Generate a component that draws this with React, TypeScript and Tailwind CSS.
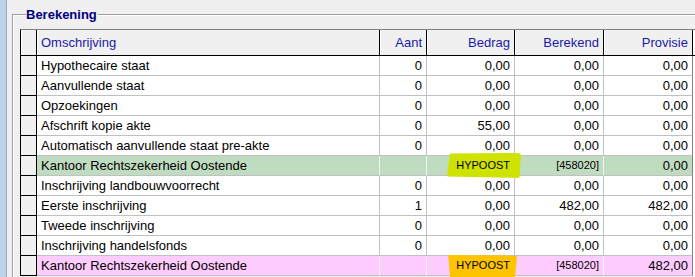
type Row = {
  d: string;
  a?: string;
  b: string;
  c: string;
  p: string;
  kind?: "green" | "pink";
};

const rows: Row[] = [
  { d: "Hypothecaire staat", a: "0", b: "0,00", c: "0,00", p: "0,00" },
  { d: "Aanvullende staat", a: "0", b: "0,00", c: "0,00", p: "0,00" },
  { d: "Opzoekingen", a: "0", b: "0,00", c: "0,00", p: "0,00" },
  { d: "Afschrift kopie akte", a: "0", b: "55,00", c: "0,00", p: "0,00" },
  { d: "Automatisch aanvullende staat pre-akte", a: "0", b: "0,00", c: "0,00", p: "0,00" },
  { d: "Kantoor Rechtszekerheid Oostende", b: "HYPOOST", c: "[458020]", p: "0,00", kind: "green" },
  { d: "Inschrijving landbouwvoorrecht", a: "0", b: "0,00", c: "0,00", p: "0,00" },
  { d: "Eerste inschrijving", a: "1", b: "0,00", c: "482,00", p: "482,00" },
  { d: "Tweede inschrijving", a: "0", b: "0,00", c: "0,00", p: "0,00" },
  { d: "Inschrijving handelsfonds", a: "0", b: "0,00", c: "0,00", p: "0,00" },
  { d: "Kantoor Rechtszekerheid Oostende", b: "HYPOOST", c: "[458020]", p: "482,00", kind: "pink" },
];

const head = "h-[26px] bg-[#f0f0f0] border-r border-b border-black shadow-[inset_1px_0_0_#fff] flex items-center text-[#1a1aa8]";

const DataRow = ({ r }: { r: Row }) => {
  const bg = r.kind === "green" ? "bg-[#c0dcc0]" : r.kind === "pink" ? "bg-[#ffccff]" : "bg-white";
  const line = r.kind ? "border-r border-b border-r-[#f4f4f4] border-b-[#c0c0c0]" : "border-r border-b border-[#c0c0c0]";
  const cell = `h-[20px] flex items-center justify-end pr-[4px] ${bg} ${line}`;
  return (
    <>
      <div className="h-[20px] bg-[#f0f0f0] border-r border-b border-black" />
      <div className={`h-[20px] flex items-center pl-[4px] ${bg} ${line}`}>{r.d}</div>
      <div className={cell}>{r.a ?? ""}</div>
      {r.kind ? (
        <div className={`${cell} relative`}>
          <span
            className={
              r.kind === "green"
                ? "absolute left-[20px] top-[-3px] w-[74px] h-[25px] bg-[#d0e200] rounded-[3px] [clip-path:polygon(4%_2%,100%_0,98%_100%,0_94%)]"
                : "absolute left-[19px] top-[-1px] w-[71px] h-[24px] bg-[#ffc400] rounded-[3px] [clip-path:polygon(3%_0,100%_2%,97%_100%,6%_100%)]"
            }
          />
          <span className="relative text-[11px]">{r.b}</span>
        </div>
      ) : (
        <div className={cell}>{r.b}</div>
      )}
      <div className={cell}>{r.kind ? <span className="text-[11px]">{r.c}</span> : r.c}</div>
      <div className={`h-[20px] flex items-center justify-end pr-[4px] ${bg} border-r border-b border-r-[#808080] border-b-[#c0c0c0]`}>
        {r.p}
      </div>
      <div className="h-[20px] bg-white" />
    </>
  );
};

export default function App() {
  return (
    <div className="w-[695px] h-[277px] overflow-hidden bg-[#f0f0f0] flex font-['Liberation_Sans',Arial,sans-serif] text-[13px] text-black">
      <div className="w-[7px] shrink-0 bg-[#bcd3ea] border-r border-[#9aa8b8]" />
      <div className="flex-1 pl-[5px] pt-[7px] min-w-0">
        <fieldset className="border-t border-l border-[#a0a0a0] shadow-[inset_1px_1px_0_#fff] pl-[7px] pt-[7px] h-[300px]">
          <legend className="ml-[6px] pr-[1px] bg-[#f0f0f0] font-bold text-[#000080] leading-[15px]">Berekening</legend>
          <div className="grid grid-cols-[16px_343px_47px_88px_89px_89px_1fr] border-t border-l border-t-[#808080] border-l-black leading-[19px]">
            <div className={head} />
            <div className={`${head} pl-[4px]`}>Omschrijving</div>
            <div className={`${head} justify-end pr-[4px]`}>Aant</div>
            <div className={`${head} justify-end pr-[4px]`}>Bedrag</div>
            <div className={`${head} justify-end pr-[4px]`}>Berekend</div>
            <div className={`${head} justify-end pr-[4px]`}>Provisie</div>
            <div className="h-[26px] bg-white border-b border-black" />
            {rows.map((r, i) => (
              <DataRow key={i} r={r} />
            ))}
          </div>
        </fieldset>
      </div>
    </div>
  );
}
